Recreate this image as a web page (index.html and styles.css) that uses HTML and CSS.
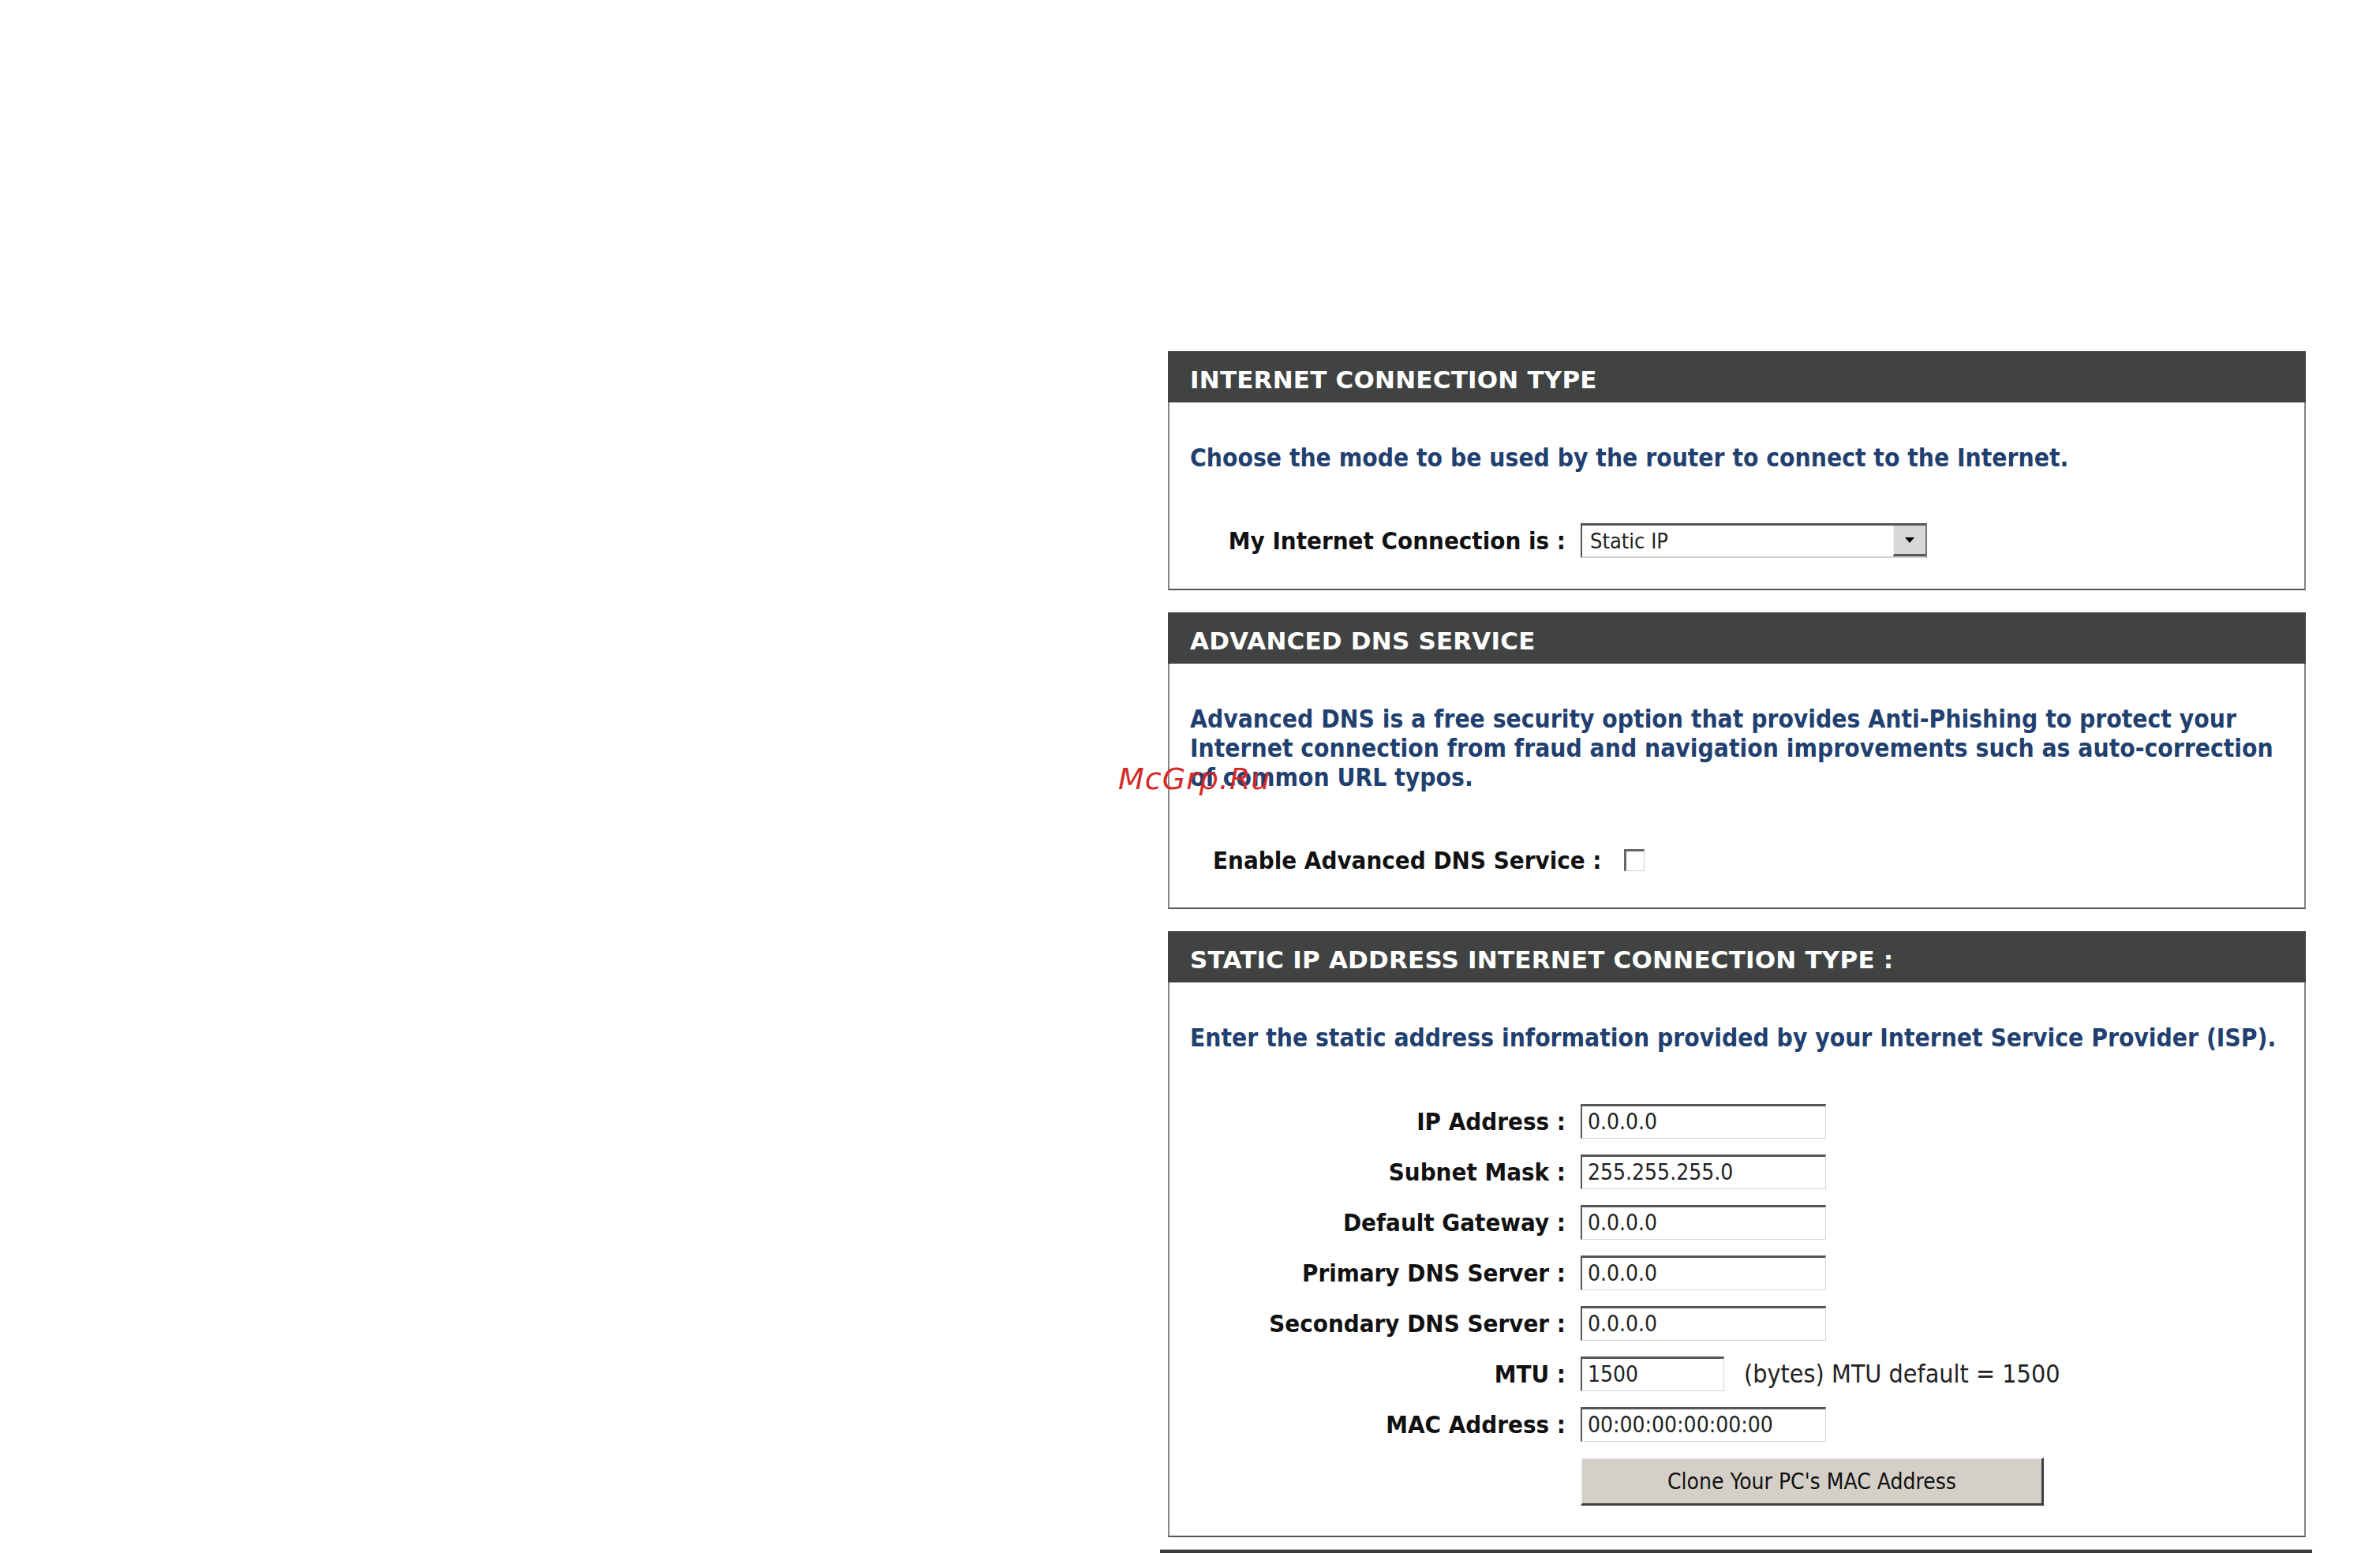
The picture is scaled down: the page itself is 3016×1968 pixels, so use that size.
FILE: index.html
```html
<!DOCTYPE html>
<html lang="en">
<head>
    <meta charset="UTF-8">
    <title>Internet Connection</title>
    <link rel="stylesheet" href="styles.css">
</head>
<body>
    <div class="watermark">McGrp.Ru</div>

    <div class="page">
        <div class="box box-type">
            <h2 class="box-title">INTERNET CONNECTION TYPE</h2>
            <div class="box-body">
                <p class="intro">Choose the mode to be used by the router to connect to the Internet.</p>
                <div class="form">
                    <label>My Internet Connection is :</label>
                    <div class="select">
                        <span class="select-value">Static IP</span>
                        <span class="select-arrow">
                            <svg width="14" height="10" viewBox="0 0 14 10"><path d="M1 2h12L7 9z" fill="#000"/></svg>
                        </span>
                    </div>
                </div>
            </div>
        </div>

        <div class="box box-dns">
            <h2 class="box-title">ADVANCED DNS SERVICE</h2>
            <div class="box-body">
                <p class="intro">Advanced DNS is a free security option that provides Anti-Phishing to protect your<br>
                    Internet connection from fraud and navigation improvements such as auto-correction<br>
                    of common URL typos.</p>
                <div class="check-row">
                    <label>Enable Advanced DNS Service :</label>
                    <span class="checkbox"></span>
                </div>
            </div>
        </div>

        <div class="box box-static">
            <h2 class="box-title">STATIC IP ADDRESS INTERNET CONNECTION TYPE :</h2>
            <div class="box-body">
                <p class="intro">Enter the static address information provided by your Internet Service Provider (ISP).</p>
                <div class="form">
                    <label>IP Address :</label>
                    <div class="input">0.0.0.0</div>

                    <label>Subnet Mask :</label>
                    <div class="input">255.255.255.0</div>

                    <label>Default Gateway :</label>
                    <div class="input">0.0.0.0</div>

                    <label>Primary DNS Server :</label>
                    <div class="input">0.0.0.0</div>

                    <label>Secondary DNS Server :</label>
                    <div class="input">0.0.0.0</div>

                    <label>MTU :</label>
                    <div class="mtu">
                        <div class="input input-short">1500</div>
                        <span class="hint">(bytes) MTU default = 1500</span>
                    </div>

                    <label>MAC Address :</label>
                    <div class="input">00:00:00:00:00:00</div>

                    <span></span>
                    <button class="btn">Clone Your PC's MAC Address</button>
                </div>
            </div>
        </div>

        <div class="next-bar"></div>
    </div>
</body>
</html>
```

FILE: styles.css
```css
body {
    margin: 0;
    background: #fff;
    position: relative;
    font-family: "DejaVu Sans Condensed", "Noto Sans", sans-serif;
}

.page {
    width: 1442px;
    margin-left: 1480px;
    padding-top: 445px;
}

.box {
    margin-bottom: 28px;
}

.box-title {
    margin: 0;
    height: 65px;
    box-sizing: border-box;
    padding: 8px 0 0 28px;
    line-height: 57px;
    background-color: #404342;
    color: #fff;
    font-family: "DejaVu Sans", sans-serif;
    font-size: 31px;
    font-weight: bold;
    letter-spacing: 0.2px;
}

.box-body {
    border: 2px solid #858585;
    border-top: none;
    border-bottom-color: #555;
    padding: 52px 0 38px 0;
}

.box-type .box-body {
    padding-bottom: 39px;
}

.box-static .intro {
    margin-bottom: 65px;
}

.intro {
    margin: 0 0 64px 26px;
    color: #213f6f;
    font-size: 31.5px;
    font-weight: bold;
    line-height: 37px;
    white-space: nowrap;
}

.form {
    display: grid;
    grid-template-columns: 500px auto;
    column-gap: 21px;
    row-gap: 20px;
    justify-items: start;
    align-items: center;
}

.form label {
    justify-self: end;
    margin-right: -2px;
    font-size: 31px;
    font-weight: bold;
    color: #111;
    white-space: nowrap;
}

.select {
    width: 439px;
    height: 44px;
    box-sizing: border-box;
    display: flex;
    align-items: stretch;
    border-top: 3px solid #555;
    border-left: 2px solid #555;
    border-right: 2px solid #777;
    border-bottom: 2px solid #cfcfcf;
    background: #fff;
    font-size: 27px;
    color: #222;
}

.select-value {
    flex: 1;
    padding-left: 10px;
    line-height: 39px;
}

.select-arrow {
    width: 40px;
    display: flex;
    align-items: center;
    justify-content: center;
    background: #d8d8d8;
    border-left: 1px solid #eee;
    border-bottom: 3px solid #555;
}

.check-row {
    display: flex;
    align-items: center;
    gap: 28px;
    padding-left: 55px;
    height: 44px;
}

.check-row label {
    font-size: 31px;
    font-weight: bold;
    color: #111;
}

.checkbox {
    width: 22px;
    height: 24px;
    border-top: 3px solid #666;
    border-left: 3px solid #666;
    border-right: 1px solid #ccc;
    border-bottom: 1px solid #ccc;
}

.input {
    width: 311px;
    height: 44px;
    box-sizing: border-box;
    padding-left: 7px;
    border-top: 3px solid #555;
    border-left: 2px solid #555;
    border-right: 1px solid #d4d4d4;
    border-bottom: 1px solid #d4d4d4;
    font-size: 28px;
    line-height: 40px;
    color: #222;
}

.input-short {
    width: 182px;
}

.mtu {
    display: flex;
    align-items: center;
    gap: 25px;
}

.hint {
    font-size: 32px;
    color: #222;
}

.btn {
    width: 587px;
    height: 61px;
    background-color: #d4d0c8;
    border-top: 2px solid #f2f2f2;
    border-left: 2px solid #f2f2f2;
    border-right: 3px solid #404040;
    border-bottom: 3px solid #404040;
    font-family: inherit;
    font-size: 28px;
    color: #111;
}

.next-bar {
    height: 12px;
    margin: -13px 0 0 -10px;
    width: 1460px;
    background-color: #3a3a3a;
    border-top: 1px solid #bbb;
}

.watermark {
    position: absolute;
    left: 1417px;
    top: 968px;
    font-family: "DejaVu Sans", sans-serif;
    font-style: italic;
    font-size: 38px;
    line-height: 38px;
    letter-spacing: 1px;
    color: #d42a2a;
}
```
